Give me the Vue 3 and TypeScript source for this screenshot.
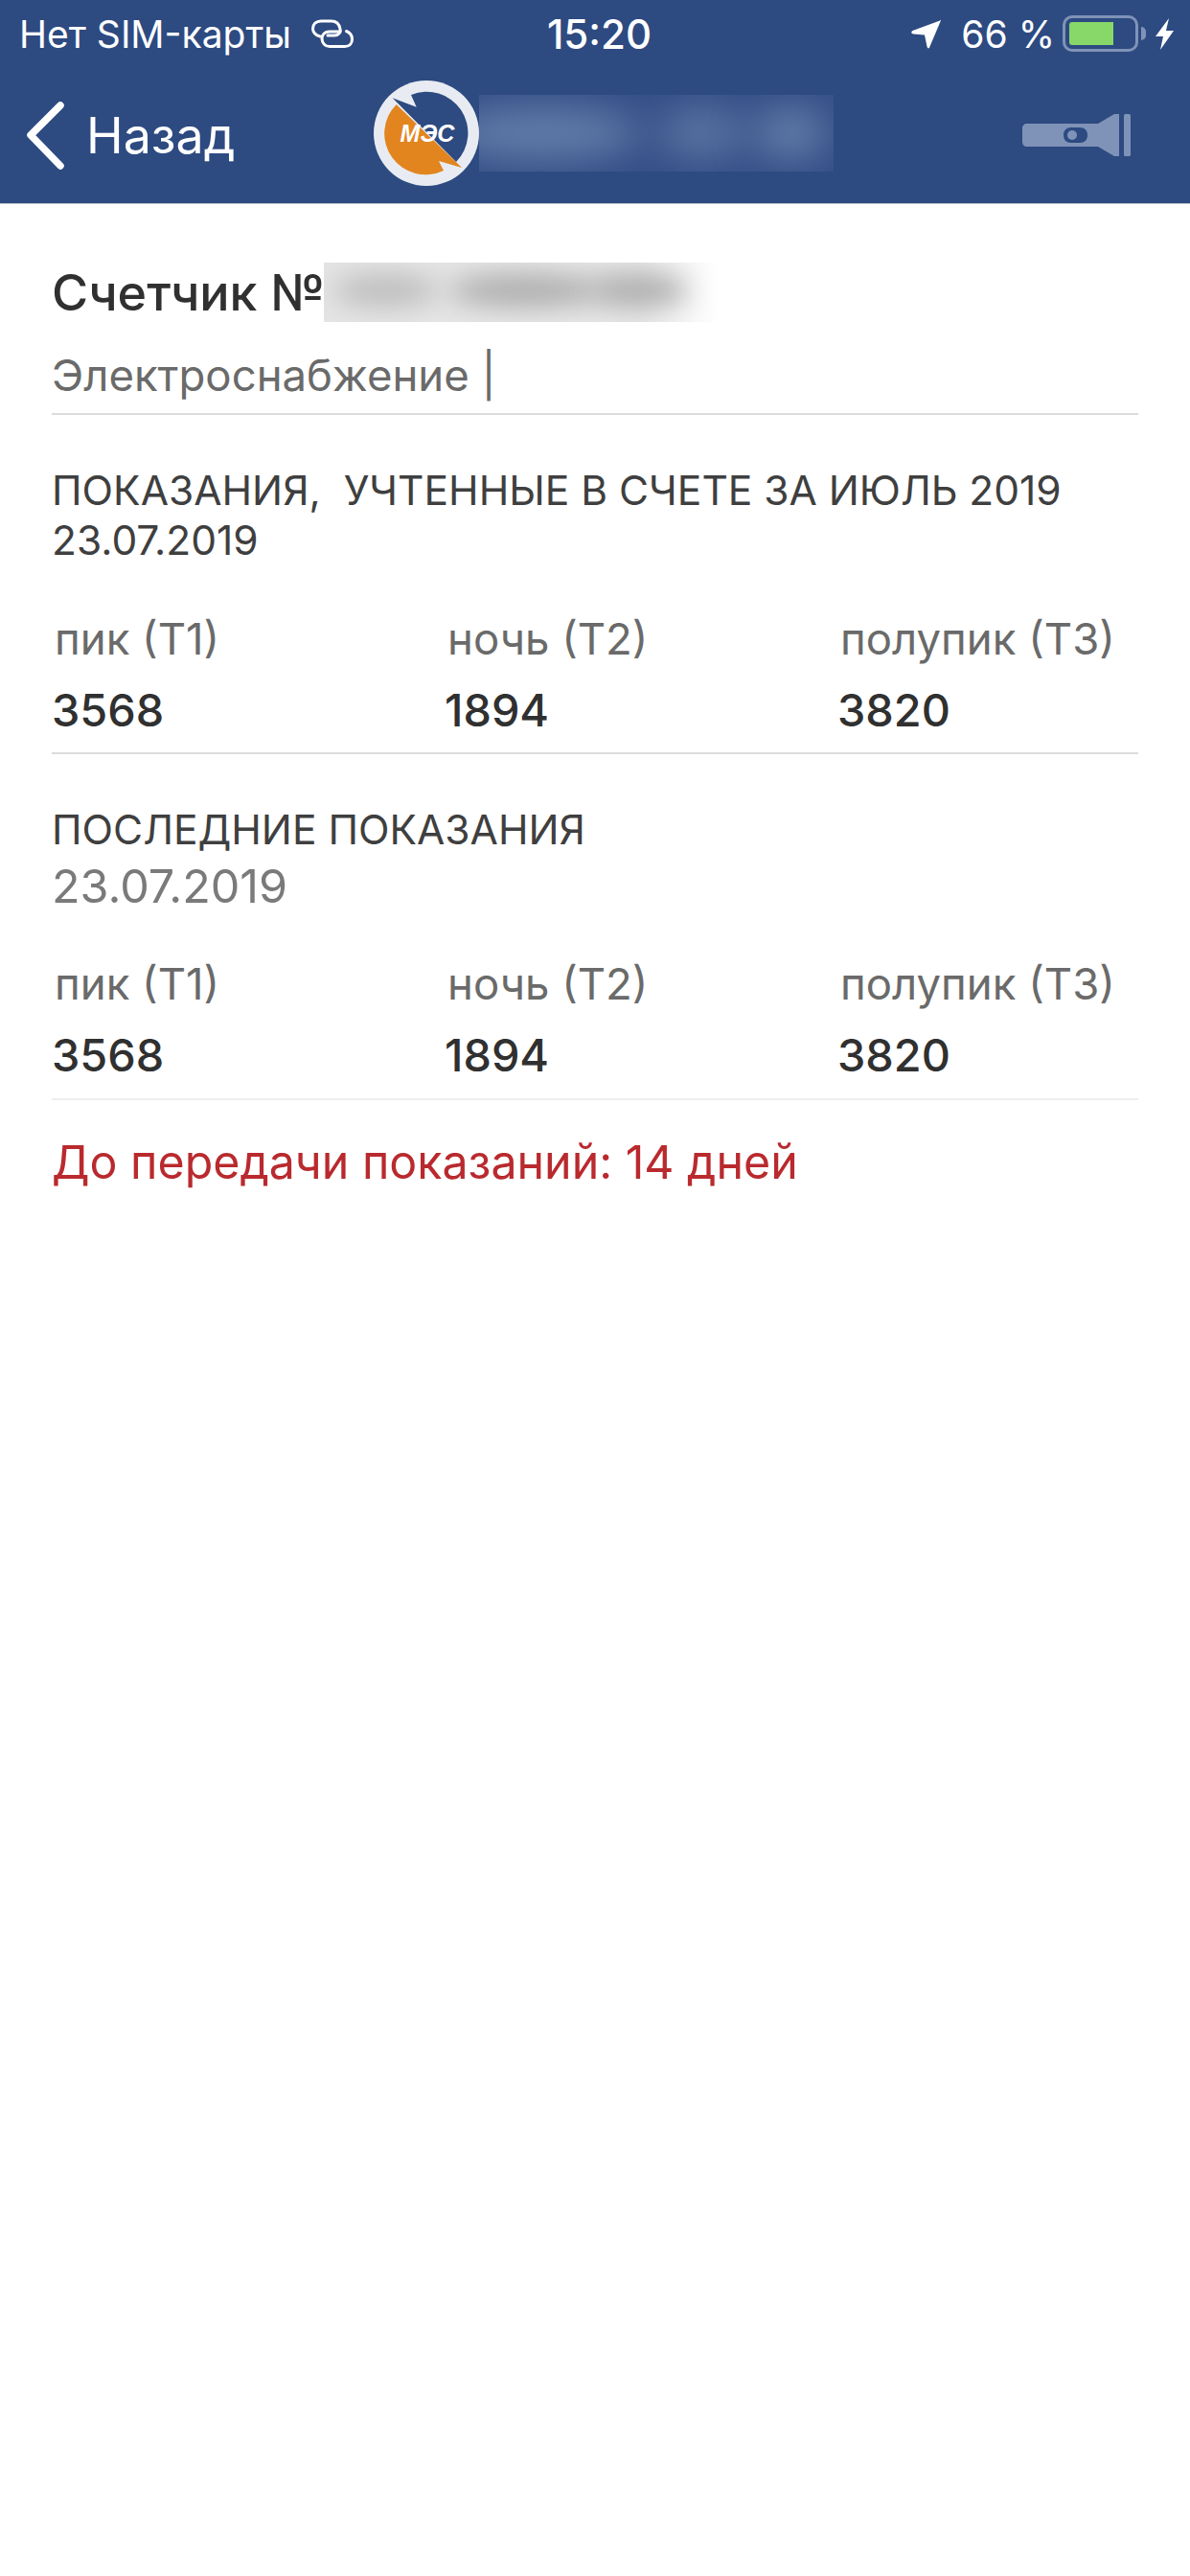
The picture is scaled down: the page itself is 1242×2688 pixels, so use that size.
<script setup lang="ts">
interface Reading {
  label: string;
  value: string;
}

const readings: Reading[] = [
  { label: "пик (Т1)", value: "3568" },
  { label: "ночь (Т2)", value: "1894" },
  { label: "полупик (Т3)", value: "3820" },
];
</script>

<template>
  <div class="screen">
    <header class="top">
      <div class="status">
        <div class="status-left">
          <span>Нет SIM-карты</span>
          <svg class="link-icon" width="46" height="32" viewBox="10 6 46 32" fill="none" stroke="#fff" stroke-width="3" stroke-linecap="round">
            <path d="M20 25C15 24 12.500 20 12.500 17 12.500 12 16 9 21 9h11c5 0 8 3 9 8 1 4-2 7-6 7h-7" />
            <path d="M41 20h-11c-5 0-8 3-8 7.500S25.500 35.500 30 35.500h16c5 0 7.500-3.500 7.500-7.500 0-4-2.500-7-6-8.500" />
          </svg>
        </div>
        <span class="clock">15:20</span>
        <div class="status-right">
          <svg class="arrow" width="33" height="32" viewBox="10 8 33 32" fill="#fff">
            <path d="M41 10.500 12.500 21c-2 1-1.500 3.200 1 3.500l11.500 1 2.500 12c.5 2.500 2.500 2.500 3 0l11-26c.5-1.500 0-2-.5-1.500z" />
          </svg>
          <span class="percent">66 %</span>
          <div class="battery">
            <div class="battery-fill"></div>
          </div>
          <div class="battery-cap"></div>
          <svg class="bolt" width="19" height="33" viewBox="0 0 19 33" fill="#fff">
            <path d="M14 0 0 19h8L5 33 19 13h-8z" />
          </svg>
        </div>
      </div>
      <nav class="nav">
        <div class="back">
          <svg width="42" height="72" viewBox="0 0 42 72" fill="none" stroke="#fff" stroke-width="7.500" stroke-linecap="round" stroke-linejoin="round">
            <path d="M36 5 5 36l31 32" />
          </svg>
          <span>Назад</span>
        </div>
        <div class="brand">
          <svg class="logo" width="110" height="110" viewBox="0 0 110 110">
            <circle cx="55" cy="55" r="55" fill="#e8ecf2" />
            <path d="M19.700 18.300 44.700 27.700 39 15A43 43 0 0 1 86 85L92 91z" fill="#2d4a81" />
            <path d="M23.700 25 92 91 68 84 73 94A43 43 0 0 1 23.700 25z" fill="#e2851f" />
            <text x="56" y="64" class="logo-text" text-anchor="middle">МЭС</text>
          </svg>
          <div class="nav-blur">
            <i class="blob blob-a"></i>
            <i class="blob blob-b"></i>
            <i class="blob blob-c"></i>
          </div>
        </div>
        <svg class="torch" width="113" height="44" viewBox="0 0 113 44" fill="#7f93b8">
          <path fill-rule="evenodd" d="M5 10h74L96 0h5v44h-5L79 34H5c-3 0-5-2-5-5V15c0-3 2-5 5-5zM51 14c-5 0-8 3-8 8s3 8 8 8h9c5 0 8-3 8-8s-3-8-8-8z" />
          <circle cx="52" cy="22" r="5" />
          <rect x="106" y="0" width="7" height="44" rx="1.500" />
        </svg>
      </nav>
    </header>

    <main class="content">
      <section class="meter">
        <div class="meter-title">
          <span class="meter-no">Счетчик №</span>
          <div class="title-blur">
            <i class="blob blob-d"></i>
            <i class="blob blob-e"></i>
            <i class="blob blob-f"></i>
          </div>
        </div>
        <div class="meter-type">Электроснабжение |</div>
      </section>

      <section class="block block-billed">
        <h2 class="block-title">ПОКАЗАНИЯ,&nbsp; УЧТЕННЫЕ В СЧЕТЕ ЗА ИЮЛЬ 2019</h2>
        <div class="block-date">23.07.2019</div>
        <div class="grid">
          <div v-for="r in readings" :key="r.label" class="cell">
            <div class="cell-label">{{ r.label }}</div>
            <div class="cell-value">{{ r.value }}</div>
          </div>
        </div>
      </section>

      <section class="block block-last">
        <h2 class="block-title">ПОСЛЕДНИЕ ПОКАЗАНИЯ</h2>
        <div class="block-date block-date--muted">23.07.2019</div>
        <div class="grid">
          <div v-for="r in readings" :key="r.label" class="cell">
            <div class="cell-label">{{ r.label }}</div>
            <div class="cell-value">{{ r.value }}</div>
          </div>
        </div>
      </section>

      <p class="notice">До передачи показаний: 14 дней</p>
    </main>
  </div>
</template>

<style scoped>
.screen {
  width: 1242px;
  height: 2688px;
  background: #fff;
  font-family: Inter, "Noto Sans", sans-serif;
  overflow: hidden;
}

.top {
  box-sizing: border-box;
  height: 213px;
  background: #2d4a81;
  border-bottom: 1px solid #c4c8cf;
  color: #fff;
}

.status {
  height: 70px;
  padding: 0 17px 0 20px;
  display: grid;
  grid-template-columns: 1fr auto 1fr;
  align-items: center;
  font-size: 39px;
}

.status-left {
  display: flex;
  align-items: center;
  gap: 20px;
}

.clock {
  margin-left: 6px;
  font-size: 42px;
  font-weight: 500;
}

.status-right {
  display: flex;
  align-items: center;
  justify-content: flex-end;
}

.percent {
  margin-left: 20px;
  margin-right: 8px;
}

.battery {
  width: 79px;
  height: 38px;
  box-sizing: border-box;
  border: 3px solid #7f93b8;
  border-radius: 10px;
  padding: 4px;
}

.battery-fill {
  width: 46px;
  height: 100%;
  background: #87d869;
  border-radius: 3px 0 0 3px;
}

.battery-cap {
  width: 5px;
  height: 14px;
  margin-left: 3px;
  background: #7f93b8;
  border-radius: 0 7px 7px 0;
}

.bolt {
  margin-left: 10px;
}

.nav {
  height: 142px;
  display: flex;
  align-items: center;
  padding: 0 62px 0 27px;
}

.back {
  display: flex;
  align-items: center;
  gap: 21px;
  width: 363px;
  font-size: 52px;
}

.brand {
  display: flex;
  align-items: center;
  flex: 1;
}

.logo {
  margin-top: -4px;
}

.logo-text {
  font-family: "Liberation Sans", sans-serif;
  font-size: 25px;
  font-weight: 700;
  font-style: italic;
  fill: #fff;
}

.nav-blur {
  width: 370px;
  height: 80px;
  margin-top: -4px;
  position: relative;
  overflow: hidden;
  background: #344f86;
}

.title-blur {
  width: 412px;
  height: 62px;
  position: relative;
  overflow: hidden;
  background: linear-gradient(90deg, #e4e4e4 0%, #e8e8e8 80%, #fff 100%);
}

.blob {
  position: absolute;
  display: block;
  border-radius: 50%;
  filter: blur(20px);
}

.blob-a,
.blob-b,
.blob-c {
  top: 12px;
  height: 56px;
  background: #637ca9;
}

.blob-a {
  left: -40px;
  width: 210px;
}

.blob-b {
  left: 185px;
  width: 95px;
  opacity: 0.8;
}

.blob-c {
  left: 285px;
  width: 80px;
}

.blob-d,
.blob-e,
.blob-f {
  top: 12px;
  height: 34px;
  background: #acacac;
  filter: blur(14px);
}

.blob-d {
  left: 10px;
  width: 110px;
  opacity: 0.7;
}

.blob-e {
  left: 130px;
  width: 160px;
}

.blob-f {
  left: 275px;
  width: 105px;
}

.content {
  padding: 0 54px;
}

.meter {
  padding-top: 61px;
  height: 220px;
  box-sizing: border-box;
  border-bottom: 2px solid #dcdcdc;
}

.meter-title {
  display: flex;
  align-items: center;
  height: 62px;
  font-size: 52px;
  font-weight: 500;
  color: #303030;
}

.meter-no {
  width: 284px;
  white-space: nowrap;
}

.meter-type {
  margin-top: 28px;
  font-size: 45.500px;
  line-height: 56px;
  color: #6a6a6a;
}

.block {
  box-sizing: border-box;
  border-bottom: 2px solid #dcdcdc;
}

.block-billed {
  padding-top: 53px;
  height: 354px;
}

.block-last {
  padding-top: 53px;
  height: 361px;
  border-bottom-color: #eceef0;
}

.block-title {
  margin: 0;
  font-size: 42.500px;
  font-weight: 400;
  line-height: 52px;
  color: #3f3f3f;
}

.block-date {
  font-size: 42.500px;
  line-height: 52px;
  color: #3f3f3f;
}

.block-date--muted {
  font-size: 48.500px;
  line-height: 66px;
  color: #7a7a7a;
}

.grid {
  display: grid;
  grid-template-columns: 410px 410px 1fr;
  margin-top: 49px;
}

.block-last .grid {
  margin-top: 41px;
}

.cell-label {
  padding-left: 3px;
  font-size: 45.500px;
  line-height: 56px;
  color: #6a6a6a;
  white-space: nowrap;
}

.cell-value {
  margin-top: 18px;
  font-size: 46.800px;
  font-weight: 500;
  line-height: 56px;
  color: #303030;
}

.notice {
  margin: 35px 0 0;
  font-size: 48.300px;
  line-height: 60px;
  color: #b92a2e;
}
</style>
